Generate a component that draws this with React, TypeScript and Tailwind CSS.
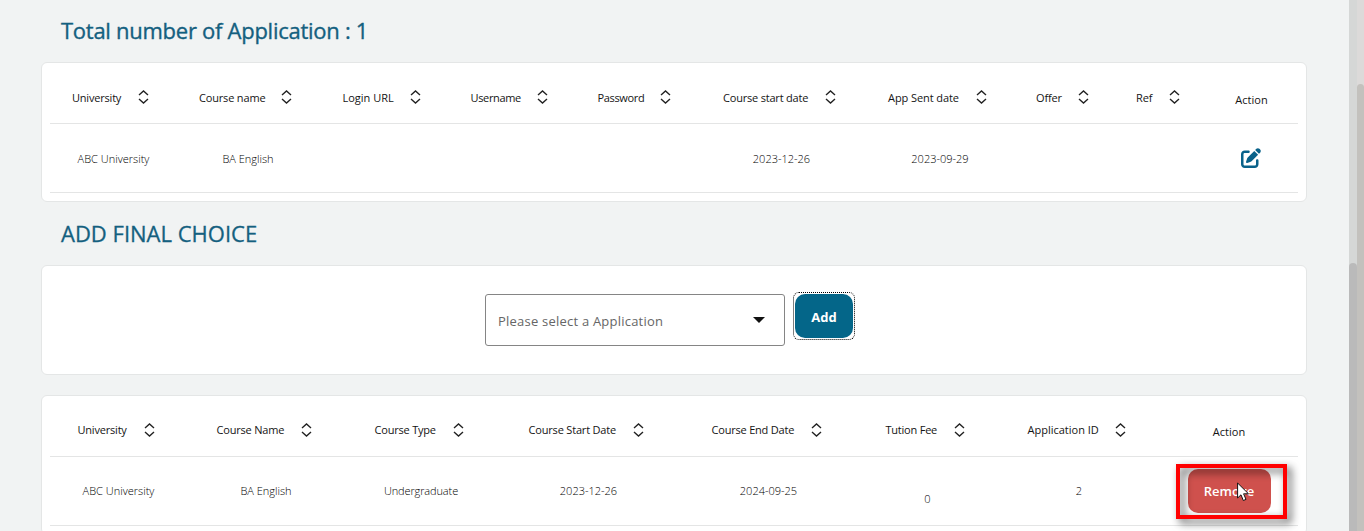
import type { ReactNode } from "react";
import { FaPenToSquare } from "react-icons/fa6";

function SortIcon() {
  return (
    <svg width="11" height="14" viewBox="0 0 11 14" fill="none" stroke="#222" strokeWidth="1.4" className="mt-[-1px] shrink-0">
      <path d="M1 5 L5.5 1 L10 5 M1 9 L5.5 13 L10 9" />
    </svg>
  );
}

type Col = { label: string; w: string; text: string };

function Head({ cols, pad, drop, action }: { cols: Col[]; pad: string; drop: string; action: string }) {
  return (
    <div className="mx-2 flex h-[61px] border-b border-[#e4e5e5] text-[11px] text-[#141414]">
      {cols.map((c) => (
        <div key={c.label} className={`flex shrink-0 items-center pt-[8px] ${c.w} ${pad}`}>
          <span className={`shrink-0 whitespace-nowrap ${drop} ${c.text}`}>{c.label}</span>
          <SortIcon />
        </div>
      ))}
      <div className={`flex shrink-0 items-center justify-center pt-[13px] ${action}`}>
        <span className={drop}>Action</span>
      </div>
    </div>
  );
}

function Cell({ w, children }: { w: string; children?: ReactNode }) {
  return <div className={`flex shrink-0 items-center justify-center whitespace-nowrap ${w}`}>{children}</div>;
}

const first: Col[] = [
  { label: "University", w: "w-[127px]", text: "w-[66px] tracking-[-0.2px]" },
  { label: "Course name", w: "w-[143.5px]", text: "w-[82px] tracking-[-0.17px]" },
  { label: "Login URL", w: "w-[128px]", text: "w-[67.5px]" },
  { label: "Username", w: "w-[127px]", text: "w-[66.5px] tracking-[-0.35px]" },
  { label: "Password", w: "w-[125.5px]", text: "w-[62.5px] tracking-[-0.35px]" },
  { label: "Course start date", w: "w-[165px]", text: "w-[101.5px] tracking-[-0.2px]" },
  { label: "App Sent date", w: "w-[148px]", text: "w-[87.5px] tracking-[-0.08px]" },
  { label: "Offer", w: "w-[100px]", text: "w-[42px] tracking-[-0.15px]" },
  { label: "Ref", w: "w-[91px]", text: "w-[32.5px] tracking-[-0.1px]" },
];
const firstRow = [
  { text: "ABC University", w: "w-[127px]" },
  { text: "BA English", w: "w-[142px]" },
  { text: "", w: "w-[130px]" },
  { text: "", w: "w-[127px]" },
  { text: "", w: "w-[123px]" },
  { text: "2023-12-26", w: "w-[165px]" },
  { text: "2023-09-29", w: "w-[152px]" },
  { text: "", w: "w-[100px]" },
  { text: "", w: "w-[89px]" },
];

const second: Col[] = [
  { label: "University", w: "w-[139px]", text: "w-[66px] tracking-[-0.2px]" },
  { label: "Course Name", w: "w-[158px]", text: "w-[84px] tracking-[-0.2px]" },
  { label: "Course Type", w: "w-[154px]", text: "w-[78px] tracking-[-0.2px]" },
  { label: "Course Start Date", w: "w-[183px]", text: "w-[104px] tracking-[-0.18px]" },
  { label: "Course End Date", w: "w-[174px]", text: "w-[99px] tracking-[-0.2px]" },
  { label: "Tution Fee", w: "w-[142px]", text: "w-[68px] tracking-[-0.22px]" },
  { label: "Application ID", w: "w-[160px]", text: "w-[87.5px]" },
];
const secondRow = [
  { text: "ABC University", w: "w-[137px]" },
  { text: "BA English", w: "w-[158px]" },
  { text: "Undergraduate", w: "w-[152px] tracking-[-0.12px]" },
  { text: "2023-12-26", w: "w-[183px]" },
  { text: "2024-09-25", w: "w-[177px]" },
  { text: "0", w: "w-[141px] pt-4" },
  { text: "2", w: "w-[162px]" },
];

export default function App() {
  return (
    <div className="flex h-[531px] w-[1364px] overflow-hidden bg-[#f1f3f3] font-['Open_Sans',sans-serif]">
      <main className="flex w-[1349px] shrink-0 flex-col pl-[41px]">
        <h1 className="flex h-[62px] shrink-0 items-center pb-0.5 pl-5 text-[22px] font-medium text-[#14607f] [-webkit-text-stroke:0.35px_#14607f]">
          <span className="whitespace-nowrap tracking-[-0.27px]">Total number of Application : 1</span>
        </h1>
        <section className="h-[140px] w-[1266px] shrink-0 rounded-md border border-[#e4e6e6] bg-white">
          <Head cols={first} pad="pl-[22px]" drop="pt-[2px]" action="w-[93px]" />
          <div className="mx-2 flex h-[69px] border-b border-[#e4e5e5] text-[11px] font-light text-black">
            {firstRow.map((c, i) => (
              <Cell key={i} w={c.w}>
                <span className="pt-[2px]">{c.text}</span>
              </Cell>
            ))}
            <Cell w="w-[92px]">
              <FaPenToSquare size={20} color="#09628a" />
            </Cell>
          </div>
        </section>
        <h2 className="flex h-[63px] shrink-0 items-center pl-5 text-[22px] font-medium text-[#14607f] [-webkit-text-stroke:0.3px_#14607f]">
          <span className="whitespace-nowrap">ADD FINAL CHOICE</span>
        </h2>
        <section className="flex h-[110px] w-[1266px] shrink-0 items-start rounded-md border border-[#e4e6e6] bg-white pl-[443px] pt-[26px]">
          <div className="mt-[2px] flex h-[52px] w-[300px] items-center justify-between rounded-[3px] border border-[#858585] pl-3 pr-[19px] text-[13px] text-[#666]">
            <span className="whitespace-nowrap pt-[3px] tracking-[0.22px]">Please select a Application</span>
            <svg width="12" height="6" viewBox="0 0 12 6">
              <path d="M0 0H12L6 6Z" fill="#111" />
            </svg>
          </div>
          <button className="ml-2 flex h-[48px] w-[62px] items-center justify-center rounded-[6px] border border-dotted border-black p-px">
            <span className="flex h-full w-full items-center justify-center rounded-[10px] bg-[#046689] pt-[3px] text-[13px] font-bold text-white">Add</span>
          </button>
        </section>
        <section className="mt-5 h-[140px] w-[1266px] shrink-0 rounded-md border border-[#e4e6e6] bg-white">
          <Head cols={second} pad="pl-[27.5px]" drop="" action="w-[138px]" />
          <div className="mx-2 flex h-[69px] border-b border-[#e4e5e5] text-[11px] font-light text-black">
            {secondRow.map((c, i) => (
              <Cell key={i} w={c.w}>{c.text}</Cell>
            ))}
            <div className="relative flex w-[138px] shrink-0 items-center justify-center">
              <button className="h-11 w-[83px] rounded-[10px] bg-[#cf514d] pt-[2px] text-[13px] font-semibold text-white">Remove</button>
              <div className="absolute left-4 top-[7px] h-[55px] w-[111px] border-4 border-[#ff0000] drop-shadow-[4px_4px_4px_rgba(0,0,0,0.7)]" />
              <svg className="absolute left-[77px] top-[25px]" width="13" height="20" viewBox="0 0 13 20">
                <path d="M.6 1V16L4 12.8L6.3 18.5L9 17.4L6.6 11.8H11.5Z" fill="#fff" stroke="#111" />
              </svg>
            </div>
          </div>
        </section>
      </main>
      <div className="flex w-2 shrink-0 flex-col bg-[#d5d7d6]">
        <div className="mt-[263px] flex-1 rounded-t bg-[#bababa]" />
      </div>
      <div className="flex w-[7px] shrink-0 flex-col bg-[#dcdad9]">
        <div className="mt-[84px] flex-1 rounded-t bg-[#c3c1bd]" />
      </div>
    </div>
  );
}
